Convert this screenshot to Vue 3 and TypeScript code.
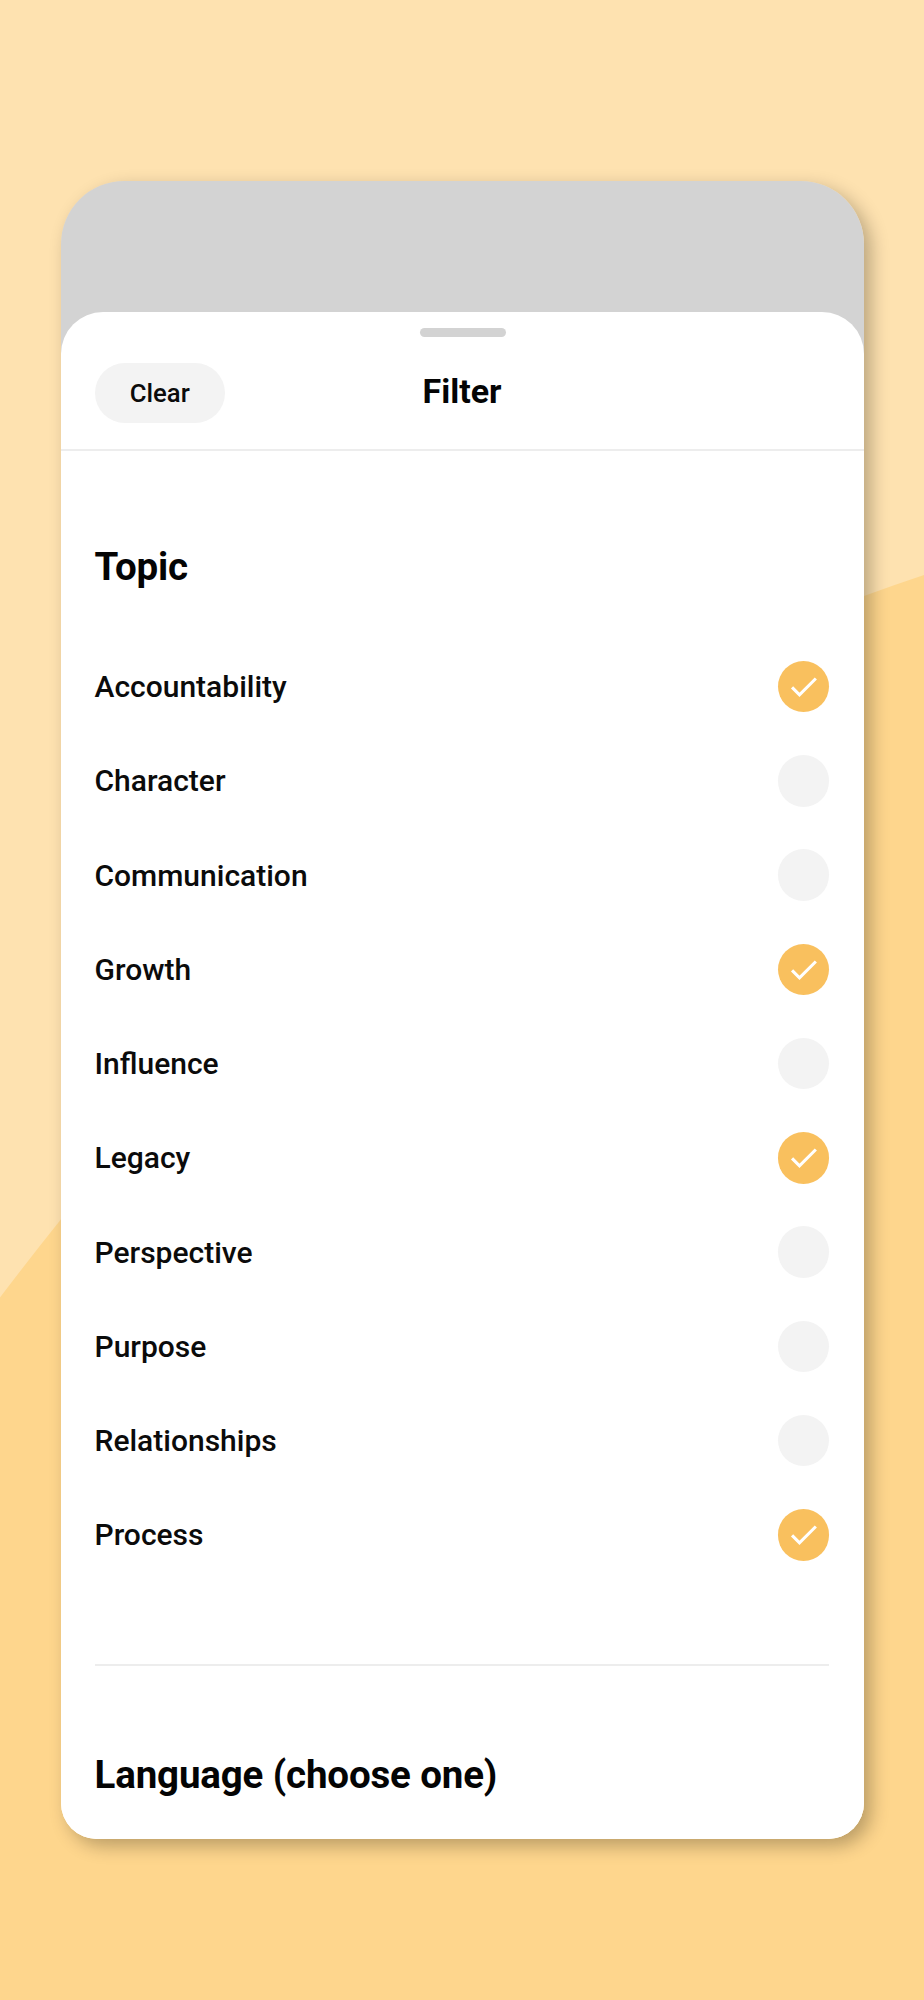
<script setup lang="ts">
import { ref } from 'vue'

interface Topic {
  name: string
  selected: boolean
}

const topics = ref<Topic[]>([
  { name: 'Accountability', selected: true },
  { name: 'Character', selected: false },
  { name: 'Communication', selected: false },
  { name: 'Growth', selected: true },
  { name: 'Influence', selected: false },
  { name: 'Legacy', selected: true },
  { name: 'Perspective', selected: false },
  { name: 'Purpose', selected: false },
  { name: 'Relationships', selected: false },
  { name: 'Process', selected: true },
])

function clearAll(): void {
  topics.value.forEach((topic) => (topic.selected = false))
}
</script>

<template>
  <main class="page">
    <svg class="backdrop" viewBox="0 0 924 2000" aria-hidden="true">
      <path d="M0 1297.5 Q30 1258 60 1220.5 C290 930 560 700 864 596 Q894 585 924 575 V2000 H0 Z" fill="#fed68d" />
    </svg>
    <div class="device">
      <section class="sheet">
        <header class="header">
          <span class="handle"></span>
          <button class="clear" type="button" @click="clearAll">Clear</button>
          <h1 class="title">Filter</h1>
        </header>
        <div class="content">
          <h2 class="heading">Topic</h2>
          <ul class="topics">
            <li v-for="topic in topics" :key="topic.name" class="topic" @click="topic.selected = !topic.selected">
              <span>{{ topic.name }}</span>
              <span class="check" :class="{ selected: topic.selected }">
                <svg v-if="topic.selected" viewBox="0 0 52 52" aria-hidden="true">
                  <path d="M14.2 26.7 L21.7 34.2 L38.2 17.7" fill="none" stroke="#fff" stroke-width="3.1" />
                </svg>
              </span>
            </li>
          </ul>
          <hr class="divider" />
          <h2 class="heading">Language (choose one)</h2>
        </div>
      </section>
    </div>
  </main>
</template>

<style>
body {
  margin: 0;
}
</style>

<style scoped>
.page {
  position: relative;
  box-sizing: border-box;
  width: 924px;
  height: 2000px;
  padding: 181px 60.5px 0;
  overflow: hidden;
  background: #fee2b0;
  font-family: Roboto, "Liberation Sans", sans-serif;
  color: #0b0b0b;
}

.backdrop {
  position: absolute;
  inset: 0;
  width: 924px;
  height: 2000px;
}

.device {
  position: relative;
  box-sizing: border-box;
  height: 1657.5px;
  padding-top: 130.5px;
  border-radius: 63px 63px 36px 36px;
  background: linear-gradient(#d3d3d3 0 240px, #fff 240px);
  box-shadow: 7px 7px 18px rgba(20, 16, 8, 0.29);
}

.sheet {
  box-sizing: border-box;
  height: 1527px;
  border-radius: 42px 42px 36px 36px;
  background: #fff;
}

.header {
  position: relative;
  box-sizing: border-box;
  display: grid;
  grid-template-columns: 1fr auto 1fr;
  align-items: start;
  height: 139.5px;
  padding: 51.5px 34px 0;
  border-bottom: 2px solid #ededed;
}

.handle {
  position: absolute;
  top: 16.5px;
  left: 359.5px;
  width: 86px;
  height: 9px;
  border-radius: 5px;
  background: #d3d3d3;
}

.clear {
  justify-self: start;
  width: 130.5px;
  height: 60px;
  padding: 0;
  border: 0;
  border-radius: 30px;
  background: #f3f3f3;
  font: 500 25.7px/60px Roboto, "Liberation Sans", sans-serif;
  color: inherit;
}

.title {
  margin: 0;
  font-size: 34px;
  font-weight: 700;
  line-height: 57px;
  color: #040404;
}

.content {
  padding: 86px 34.5px 0 34px;
}

.heading {
  margin: 0;
  font-size: 38.5px;
  font-weight: 700;
  line-height: 60px;
  letter-spacing: -0.15px;
  color: #040404;
}

.topics {
  margin: 42.5px 0 0;
  padding: 0;
  list-style: none;
}

.topic {
  display: flex;
  align-items: center;
  justify-content: space-between;
  height: 94.25px;
  font-size: 30px;
  font-weight: 500;
}

.check {
  width: 51.5px;
  height: 51.5px;
  border-radius: 50%;
  background: #f3f3f3;
}

.check.selected {
  background: #f9c05e;
}

.check svg {
  display: block;
}

.divider {
  height: 2px;
  margin: 81.5px 0 79px;
  border: 0;
  background: #ededed;
}
</style>
